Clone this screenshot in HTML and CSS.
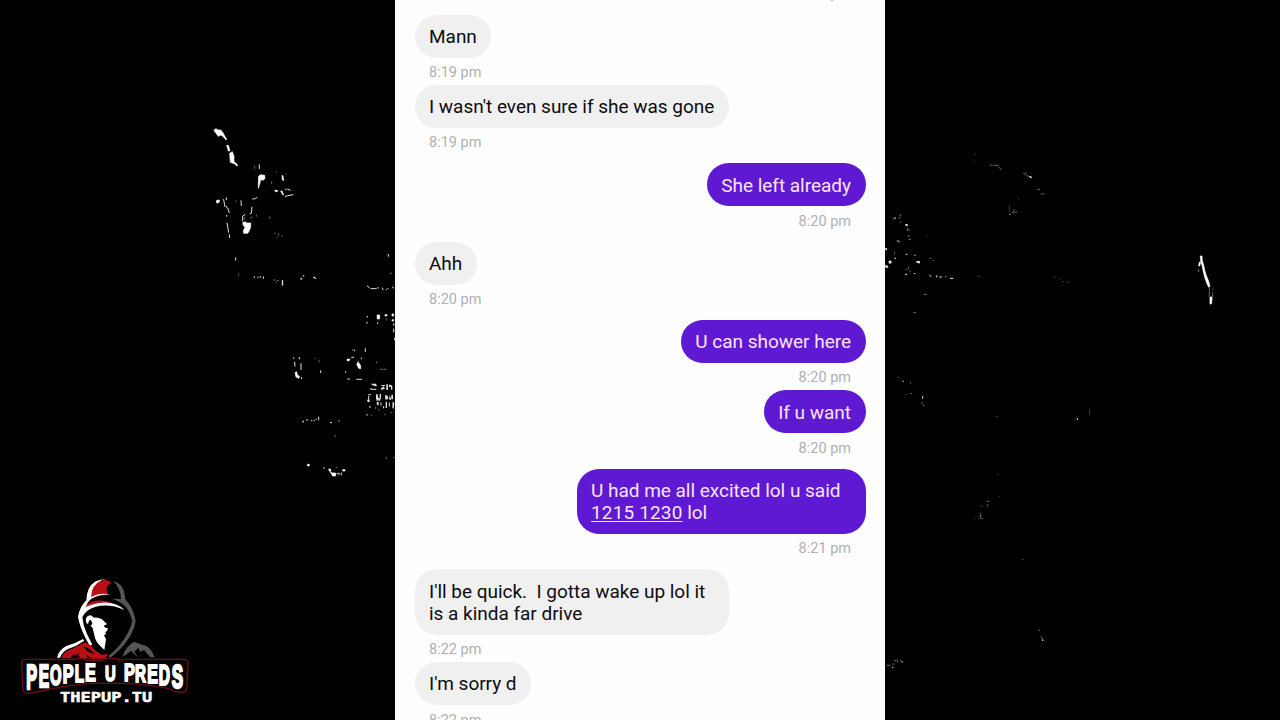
FILE: index.html
```
<!DOCTYPE html>
<html lang="en">
<head>
    <meta charset="UTF-8">
    <meta name="viewport" content="width=device-width, initial-scale=1.0">
    <title>People U Preds - Chat Log</title>
    <link rel="stylesheet" href="styles.css">
</head>
<body>

    <!-- Background specks -->
    <svg class="specks" viewBox="0 0 1280 720" aria-hidden="true">
        <!-- Upper left -->
        <g transform="translate(200 110) scale(.3333)">
            <path class="blob" d="M42 61l5-5 7 4 8 0 7 8 5 10 6 10-2 2-8-10-7-5-8 4-6-8zM80 106l5 0 5 16-5 1zM89 130l8-5 5 14 0 17 8 5 3 6-3 1-5-6-14-5-1-12zM176 198l7-4 11 2 1 9-5 6-8-2-3 14-4 12 0-19zM128 338l8-3 3 4 13 0 0 13-5 12-4 6-12 0-1-8 5-10-5-6zM246 197l3 0 2 15-4-2zM224 241l8 0 0 4-5 0zM242 243l4 0 5 12-3-1zM50 271l8-1 0 5-5 5-4-3z"/>
            <path class="line" d="M178 163v14M255 260l8-3 17-3M255 237l5 2M262 237l10 4M157 267l10-1 5-5M68 267l3 2 4 22M79 262v8M79 288l3 8M84 295l4 14M80 315v5M81 338l5 30M88 373l1 11M123 271l1 17M156 290l-2 20M128 334v-16l8-5M149 311h5M107 442v10M247 510v17M163 499v5M174 500v5M181 498v5M190 499v8M301 507h6M340 502l8 4M565 432v8M501 528l8 6M512 536h18M534 531v5M546 533l4 7M559 537v3M564 537v-3M576 530l6 5"/>
            <path class="dim" d="M164 167v9M215 214v9M105 274h4M170 314v6M209 319v8M134 321v8M150 325l8-5M222 370h5M229 383h4M236 370v9M244 378h5M116 491v6M232 512h5M307 498h5M570 490h5M228 187h3M257 192h4"/>
        </g>
        <!-- Lower left -->
        <g transform="translate(270 270) scale(.3333)">
            <path class="blob" d="M75 308l5-3 2 10 6 4-1 6-9-4zM260 283l4-5 4 2 4 8 0 8-6-1zM231 268l8-1-1 5-6 1zM321 135h8v12h-7zM345 134h6v4h-6zM366 132h5v6h-5zM366 149h5v4h-5zM180 604l6 5 11 0 0 9-9 0-4-7zM176 597l5 0 2 6-5 0zM218 599h7v4h-7zM112 583h6v5h-5z"/>
            <path fill="#ddd" d="M303 341l15 0 3 8-5 0-10-4zM301 353l7 4 11-1 0 4-17-1zM334 345h11v3h-11zM341 349l4 8-12 2v-4zM349 343h5v17h-5zM358 343l9 4v12h-4v-8h-6zM318 373l5 0 2 11 6 4-2 4-11-4zM329 372h4v16h-4zM345 375l8 2 2 10-9 2zM358 376l5 8 0 5-5 0zM364 374h5v14h-5zM293 373h10v3h-8zM291 389h8v7h-6zM320 396h6v10h-5zM347 395h4v19h-4zM368 394l5 5-2 18-4-4z"/>
            <path class="line" d="M38 31v15M92 27l4-3M99 18h4M130 22h6M71 262v5M74 275l1 15M88 261v7M93 280v20M94 321l1 6M286 235v11M247 240h3M254 239v5M244 262h8M274 263v5M261 279l5-5M227 304v5M232 327h8M259 328h17M152 301v8M292 138v5M291 155v6M323 157v5M371 160v7M371 176v11M374 203v8M296 378v13M318 390h12M333 397v10M358 398v12M300 408v6M341 408v7M291 432v5M99 458v-5l3 1M108 450h6M123 452h4M130 452h4M138 450v-4M146 440v11M180 458h6M205 453h4M200 611h5M207 608v8M214 608v8M162 592v5"/>
            <path class="dim" d="M147 269v8M134 267l3-4M10 30h7M20 33v4M320 274v6M330 298h8M340 298h10M361 428h6M343 433h5M302 436h4M195 494v7M197 592h5M349 561v7M360 10h4M369 563h4M292 48h4M317 410v7M327 417v5M349 145v7"/>
        </g>
        <!-- Upper right -->
        <g transform="translate(880 140) scale(.3333)">
            <path fill="#ddd" d="M16 324h5v7h-5zM25 364l7-3 4 7-8 4zM15 375l9 2 1 6-9 0zM109 363h11v7h-6l-5-3zM447 108l7 1 2 6-6-2zM76 252h7v6h-6z"/>
            <path class="line" d="M53 302l6 4M77 343h5M103 346h4M148 405l6 5M170 406v6M178 411h8M210 415h10M75 403h6M102 401h4M388 223h4M43 238l4-6M43 355h5"/>
            <path class="dim" d="M61 222v7M56 234h6M38 235h4M62 245v4M82 263v10M84 270h6M82 288h8M85 298h8M50 300l4 6M43 335v8M86 380v8M76 388h6M90 391v6M148 355h5M158 362h4M194 410h6M131 463h10M100 518h8M330 74l8 4M340 76h16M356 80l8 10M430 98l6 8M438 97v6M442 105l4 8M472 148h8M482 162h12M402 208v8M406 218l4-5M395 218h8"/>
            <path class="faint" d="M141 284v4M388 194v22M415 174v5M284 40v6M283 64v5M292 409h10M518 411h12M538 417h7M545 425h8M558 425l12 2"/>
        </g>
        <!-- Far right streak -->
        <g transform="translate(1180 240) scale(.3333)">
            <path class="blob" d="M61 48h5l1 15 4 12 3 15 4 14 8 20 4 15-4 3-6-13-6-18-4-16-4-19-4-13zM58 66h4l-3 12h-3zM90 171h6v9l-2 12h-4z"/>
            <path class="dim" d="M56 87v10M88 143v28M98 157v14M99 146v4"/>
        </g>
        <!-- Lower right -->
        <g transform="translate(880 370) scale(.3333)">
            <path class="line" d="M68 34h4M128 78v8M592 144v6M300 438h4M488 808v5M65 876h4M36 892h4"/>
            <path class="dim" d="M91 35v6M90 71h6M124 97l3 6M129 106h5M319 394h9M323 402v8M302 428v6M298 445h10M474 780l6 2M482 799l6 8M490 811h4M42 872h6M52 868v10M60 870l6 6M20 886h12M38 882h6"/>
            <path class="faint" d="M52 22h8M64 26v6M76 74h6M346 140h9M582 151h5M629 115v20M354 309v8M356 380h5M300 409h8M292 438h4M282 444h4M424 568h8"/>
        </g>
    </svg>

    <!-- Chat -->
    <main class="chat">
        <div class="message received">
            <p class="bubble">Mann</p>
            <span class="time">8:19 pm</span>
        </div>
        <div class="message received">
            <p class="bubble">I wasn't even sure if she was gone</p>
            <span class="time">8:19 pm</span>
        </div>
        <div class="message sent group-start">
            <p class="bubble">She left already</p>
            <span class="time">8:20 pm</span>
        </div>
        <div class="message received group-start">
            <p class="bubble">Ahh</p>
            <span class="time">8:20 pm</span>
        </div>
        <div class="message sent group-start">
            <p class="bubble">U can shower here</p>
            <span class="time">8:20 pm</span>
        </div>
        <div class="message sent">
            <p class="bubble">If u want</p>
            <span class="time">8:20 pm</span>
        </div>
        <div class="message sent group-start">
            <p class="bubble">U had me all excited lol u said <a href="#">1215 1230</a> lol</p>
            <span class="time">8:21 pm</span>
        </div>
        <div class="message received group-start">
            <p class="bubble wide">I'll be quick.&nbsp; I gotta wake up lol it is a kinda far drive</p>
            <span class="time">8:22 pm</span>
        </div>
        <div class="message received">
            <p class="bubble">I'm sorry d</p>
            <span class="time">8:22 pm</span>
        </div>
    </main>

    <!-- Logo -->
    <svg class="logo" viewBox="0 0 570 420" role="img" aria-label="People U Preds">
        <!-- Hood -->
        <path class="red" d="M236 88q4-38 29-52l22-6q14 4 17 10-10 3-14 11-2 12 4 24-30 1-58 13zM224 113q9-18 35-21 33-2 56 12l-22 0q-40-2-69 9z"/>
        <path fill="#fff" d="M290 27q-40 0-54 30-6 13-7 34-19 17-25 49 5 29 22 63l13 24 8-3-16-32q-12-25-14-50 9-22 38-31 42-12 88 9-24-24-67-22-27 2-49 13 5-16 16-24 24-15 60-13-33-8-60 7 1-36 32-50z"/>
        <path fill="#555" d="M309 33q26 7 33 30l4 25 13 16q13 21 18 50-5 27-22 53-20 31-54 56l-6-5q32-26 50-55 17-27 22-50-7-27-20-43-17-17-41-24l27 1q-1-33-24-54z"/>
        <!-- Face -->
        <path fill="#fff" d="M243 136l9 7q18-2 30 11 6 7 10 8l-11 5 5 6 8 1-3 9-5 3 2 6-6 4 6 12-5 32-10-10q-16-13-20-34l-5-22-7-8 4-1 2-7-5-9-5 3-3 11q-9-6-6-18 4-9 15-9z"/>
        <!-- Shoulders -->
        <path fill="#fff" d="M141 263q7-25 28-35 26-7 50-21l4 5q-23 17-49 25-17 8-24 26z"/>
        <path class="red" d="M154 264q10-23 32-27l39-20 17 9 15 16 19 13 18-4-9 16z"/>
        <path fill="#000" d="M182 264q3-9 12-13l-1 6 18-9-7 8 6 8zM218 228l22 10 14 14-20-6zM228 254l18 10h-14z"/>
        <path fill="#555" d="M337 260q11-32 35-45l25 9q24 2 37 38h-13l-19-22-11 6-6-13-12 12 12 18-22-20-12 9z"/>
        <!-- Name plate -->
        <path class="plate" d="M48 268H196L206 264 240 272 276 272 282 266H324L330 272 342 268H522Q534 268 534 280L530 356Q528 368 514 367L494 364Q470 352 440 350 390 340 340 340H250Q180 344 130 356L84 364Q66 372 48 369 38 366 38 354L35 280Q36 269 48 268Z"/>
        <g class="name">
            <text transform="translate(49 357) scale(.92 1.96)">P</text>
            <text transform="translate(86 350) scale(.88 1.78)">E</text>
            <text transform="translate(120 344) scale(.84 1.62)">O</text>
            <text transform="translate(158 339) scale(.92 1.5)">P</text>
            <text transform="translate(194 335) scale(.86 1.39)">L</text>
            <text transform="translate(225 333) scale(.92 1.33)">E</text>
            <text transform="translate(285 332) scale(.84 1.3)">U</text>
            <text transform="translate(342 333) scale(.92 1.33)">P</text>
            <text transform="translate(375 335) scale(.86 1.39)">R</text>
            <text transform="translate(412 339) scale(.9 1.5)">E</text>
            <text transform="translate(446 345) scale(.88 1.65)">D</text>
            <text transform="translate(485 354) scale(.96 1.87)">S</text>
        </g>
        <text class="site" x="150" y="395" textLength="277" lengthAdjust="spacingAndGlyphs">THEPUP.TU</text>
    </svg>

</body>
</html>
```
FILE: styles.css
```
/* General Styles */
* {
    margin: 0;
    padding: 0;
    box-sizing: border-box;
}
body {
    position: relative;
    height: 100vh;
    display: flex;
    justify-content: center;
    overflow: hidden;
    background: #000;
    font-family: Roboto, Arial, sans-serif;
}

/* Background */
.specks {
    position: absolute;
    top: 0;
    left: 0;
    width: 1280px;
    height: 720px;
}
.specks path {
    fill: none;
    stroke-width: 3;
}
.specks path[fill] {
    fill: #ddd;
}
.specks .blob {
    fill: #fff;
    stroke: #fff;
    stroke-width: 2;
}
.specks .line {
    stroke: #ddd;
}
.specks .dim {
    stroke: #666;
}
.specks .faint {
    stroke: #333;
}

/* Chat */
.chat {
    position: relative;
    width: 490px;
    height: 720px;
    padding: 14.5px 19.5px 0;
    display: flex;
    flex-direction: column;
    overflow: hidden;
    background: #fefefe;
}
/* tail of the message scrolled off the top */
.chat::before {
    content: "";
    position: absolute;
    top: 0;
    left: 436px;
    width: 2px;
    height: 1px;
    background: #bbb;
}
.message {
    flex-shrink: 0;
    display: flex;
    flex-direction: column;
    align-items: flex-start;
}
.message.sent {
    align-items: flex-end;
}
.group-start {
    margin-top: 8.1px;
}
.bubble {
    max-width: 316px;
    padding: 11.4px 14.5px 9.4px;
    border-radius: 22px;
    background: #f0f0f0;
    color: #0c0c0c;
    font-size: 19px;
    line-height: 22.4px;
    letter-spacing: -0.02px;
}
.wide {
    max-width: 314px;
}
.sent .bubble {
    max-width: 289px;
    background: #5f19d3;
    color: #fbe4fb;
}
.bubble a {
    color: inherit;
    letter-spacing: 0.15px;
    text-decoration: underline;
    text-decoration-thickness: 1px;
    text-underline-offset: 2px;
}
.time {
    padding: 4.3px 14.5px 0;
    color: #b0b0b0;
    font-size: 14.5px;
    line-height: 22.8px;
}

/* Logo */
.logo {
    position: absolute;
    left: 10px;
    top: 570px;
    width: 190px;
    height: 140px;
}
.red {
    fill: #bd0d16;
}
.plate {
    fill: #080406;
    stroke: #6b0c1a;
    stroke-width: 4;
}
.name {
    fill: #fff;
    stroke: #fff;
    stroke-width: 4px;
    font-family: "Liberation Sans", Arial, sans-serif;
    font-size: 53px;
    font-weight: bold;
}
.site {
    fill: #fff;
    stroke: #fff;
    stroke-width: 1.5px;
    font-family: "DejaVu Sans Mono", monospace;
    font-size: 44px;
    font-weight: bold;
}
```
